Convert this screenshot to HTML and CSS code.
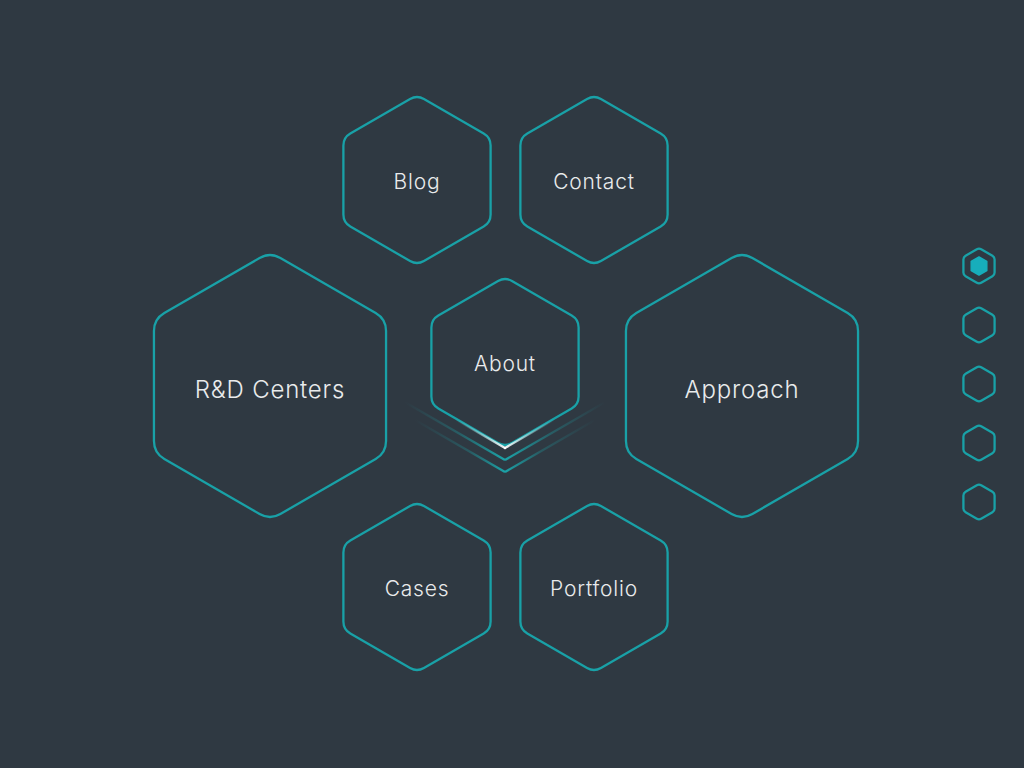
FILE: index.html
```html
<!DOCTYPE html>
<html lang="en">
<head>
<meta charset="utf-8">
<title>Honeycomb menu</title>
<link rel="stylesheet" href="styles.css">
</head>
<body>
<div class="page">
  <main class="stage">
    <a class="hex hex-sm blog" href="#">
      <svg class="hex-shape" viewBox="0 0 150 172"><path d="M81.93 5 L141.68 39.5 Q148.61 43.5 148.61 51.5 L148.61 120.5 Q148.61 128.5 141.68 132.5 L81.93 167 Q75 171 68.07 167 L8.32 132.5 Q1.39 128.5 1.39 120.5 L1.39 51.5 Q1.39 43.5 8.32 39.5 L68.07 5 Q75 1 81.93 5 Z"/></svg>
      <span class="label">Blog</span>
    </a>
    <a class="hex hex-sm contact" href="#">
      <svg class="hex-shape" viewBox="0 0 150 172"><path d="M81.93 5 L141.68 39.5 Q148.61 43.5 148.61 51.5 L148.61 120.5 Q148.61 128.5 141.68 132.5 L81.93 167 Q75 171 68.07 167 L8.32 132.5 Q1.39 128.5 1.39 120.5 L1.39 51.5 Q1.39 43.5 8.32 39.5 L68.07 5 Q75 1 81.93 5 Z"/></svg>
      <span class="label">Contact</span>
    </a>
    <a class="hex hex-lg rd" href="#">
      <svg class="hex-shape" viewBox="0 0 236 270"><path d="M128.39 7 L223.66 62 Q234.05 68 234.05 80 L234.05 190 Q234.05 202 223.66 208 L128.39 263 Q118 269 107.61 263 L12.34 208 Q1.95 202 1.95 190 L1.95 80 Q1.95 68 12.34 62 L107.61 7 Q118 1 128.39 7 Z"/></svg>
      <span class="label">R&amp;D Centers</span>
    </a>
    <a class="hex hex-sm about" href="#">
      <svg class="hex-shape" viewBox="0 0 150 172"><path d="M81.93 5 L141.68 39.5 Q148.61 43.5 148.61 51.5 L148.61 120.5 Q148.61 128.5 141.68 132.5 L81.93 167 Q75 171 68.07 167 L8.32 132.5 Q1.39 128.5 1.39 120.5 L1.39 51.5 Q1.39 43.5 8.32 39.5 L68.07 5 Q75 1 81.93 5 Z"/></svg>
      <span class="label">About</span>
    </a>
    <a class="hex hex-lg approach" href="#">
      <svg class="hex-shape" viewBox="0 0 236 270"><path d="M128.39 7 L223.66 62 Q234.05 68 234.05 80 L234.05 190 Q234.05 202 223.66 208 L128.39 263 Q118 269 107.61 263 L12.34 208 Q1.95 202 1.95 190 L1.95 80 Q1.95 68 12.34 62 L107.61 7 Q118 1 128.39 7 Z"/></svg>
      <span class="label">Approach</span>
    </a>
    <a class="hex hex-sm cases" href="#">
      <svg class="hex-shape" viewBox="0 0 150 172"><path d="M81.93 5 L141.68 39.5 Q148.61 43.5 148.61 51.5 L148.61 120.5 Q148.61 128.5 141.68 132.5 L81.93 167 Q75 171 68.07 167 L8.32 132.5 Q1.39 128.5 1.39 120.5 L1.39 51.5 Q1.39 43.5 8.32 39.5 L68.07 5 Q75 1 81.93 5 Z"/></svg>
      <span class="label">Cases</span>
    </a>
    <a class="hex hex-sm portfolio" href="#">
      <svg class="hex-shape" viewBox="0 0 150 172"><path d="M81.93 5 L141.68 39.5 Q148.61 43.5 148.61 51.5 L148.61 120.5 Q148.61 128.5 141.68 132.5 L81.93 167 Q75 171 68.07 167 L8.32 132.5 Q1.39 128.5 1.39 120.5 L1.39 51.5 Q1.39 43.5 8.32 39.5 L68.07 5 Q75 1 81.93 5 Z"/></svg>
      <span class="label">Portfolio</span>
    </a>

    <svg class="chevrons" viewBox="0 0 240 100" aria-hidden="true">
      <defs>
        <linearGradient id="hlL" gradientUnits="userSpaceOnUse" x1="120" y1="0" x2="70" y2="0">
          <stop offset="0" stop-color="#ffffff" stop-opacity="0.95"/>
          <stop offset="1" stop-color="#9fe3e6" stop-opacity="0"/>
        </linearGradient>
        <linearGradient id="hlR" gradientUnits="userSpaceOnUse" x1="120" y1="0" x2="170" y2="0">
          <stop offset="0" stop-color="#ffffff" stop-opacity="0.95"/>
          <stop offset="1" stop-color="#9fe3e6" stop-opacity="0"/>
        </linearGradient>
        <linearGradient id="c2L" gradientUnits="userSpaceOnUse" x1="120" y1="0" x2="20" y2="0">
          <stop offset="0" stop-color="#1ba3a8" stop-opacity="1"/>
          <stop offset="0.45" stop-color="#1ba3a8" stop-opacity="0.35"/>
          <stop offset="1" stop-color="#1ba3a8" stop-opacity="0"/>
        </linearGradient>
        <linearGradient id="c2R" gradientUnits="userSpaceOnUse" x1="120" y1="0" x2="220" y2="0">
          <stop offset="0" stop-color="#1ba3a8" stop-opacity="1"/>
          <stop offset="0.45" stop-color="#1ba3a8" stop-opacity="0.35"/>
          <stop offset="1" stop-color="#1ba3a8" stop-opacity="0"/>
        </linearGradient>
        <linearGradient id="c3L" gradientUnits="userSpaceOnUse" x1="120" y1="0" x2="30" y2="0">
          <stop offset="0" stop-color="#1ba3a8" stop-opacity="1"/>
          <stop offset="0.4" stop-color="#1ba3a8" stop-opacity="0.3"/>
          <stop offset="1" stop-color="#1ba3a8" stop-opacity="0"/>
        </linearGradient>
        <linearGradient id="c3R" gradientUnits="userSpaceOnUse" x1="120" y1="0" x2="210" y2="0">
          <stop offset="0" stop-color="#1ba3a8" stop-opacity="1"/>
          <stop offset="0.4" stop-color="#1ba3a8" stop-opacity="0.3"/>
          <stop offset="1" stop-color="#1ba3a8" stop-opacity="0"/>
        </linearGradient>
      </defs>
      <path d="M120 50 L72 22.3" stroke="url(#hlL)" stroke-width="2.2" fill="none" stroke-linecap="round"/>
      <path d="M120 50 L168 22.3" stroke="url(#hlR)" stroke-width="2.2" fill="none" stroke-linecap="round"/>
      <path d="M120 62 L20 4.3" stroke="url(#c2L)" stroke-width="2.2" fill="none"/>
      <path d="M120 62 L220 4.3" stroke="url(#c2R)" stroke-width="2.2" fill="none"/>
      <path d="M120 74 L30 22" stroke="url(#c3L)" stroke-width="2.2" fill="none"/>
      <path d="M120 74 L210 22" stroke="url(#c3R)" stroke-width="2.2" fill="none"/>
    </svg>
  </main>

  <nav class="dots">
    <a class="dot active" href="#"><svg viewBox="0 0 36 40"><path class="dot-outline" d="M20.17 3.25 L31.43 9.75 Q33.59 11 33.59 13.5 L33.59 26.5 Q33.59 29 31.43 30.25 L20.17 36.75 Q18 38 15.83 36.75 L4.58 30.25 Q2.41 29 2.41 26.5 L2.41 13.5 Q2.41 11 4.58 9.75 L15.83 3.25 Q18 2 20.17 3.25 Z"/><polygon class="dot-fill" points="18,11 25.8,15.5 25.8,24.5 18,29 10.2,24.5 10.2,15.5"/></svg></a>
    <a class="dot" href="#"><svg viewBox="0 0 36 40"><path class="dot-outline" d="M20.17 3.25 L31.43 9.75 Q33.59 11 33.59 13.5 L33.59 26.5 Q33.59 29 31.43 30.25 L20.17 36.75 Q18 38 15.83 36.75 L4.58 30.25 Q2.41 29 2.41 26.5 L2.41 13.5 Q2.41 11 4.58 9.75 L15.83 3.25 Q18 2 20.17 3.25 Z"/></svg></a>
    <a class="dot" href="#"><svg viewBox="0 0 36 40"><path class="dot-outline" d="M20.17 3.25 L31.43 9.75 Q33.59 11 33.59 13.5 L33.59 26.5 Q33.59 29 31.43 30.25 L20.17 36.75 Q18 38 15.83 36.75 L4.58 30.25 Q2.41 29 2.41 26.5 L2.41 13.5 Q2.41 11 4.58 9.75 L15.83 3.25 Q18 2 20.17 3.25 Z"/></svg></a>
    <a class="dot" href="#"><svg viewBox="0 0 36 40"><path class="dot-outline" d="M20.17 3.25 L31.43 9.75 Q33.59 11 33.59 13.5 L33.59 26.5 Q33.59 29 31.43 30.25 L20.17 36.75 Q18 38 15.83 36.75 L4.58 30.25 Q2.41 29 2.41 26.5 L2.41 13.5 Q2.41 11 4.58 9.75 L15.83 3.25 Q18 2 20.17 3.25 Z"/></svg></a>
    <a class="dot" href="#"><svg viewBox="0 0 36 40"><path class="dot-outline" d="M20.17 3.25 L31.43 9.75 Q33.59 11 33.59 13.5 L33.59 26.5 Q33.59 29 31.43 30.25 L20.17 36.75 Q18 38 15.83 36.75 L4.58 30.25 Q2.41 29 2.41 26.5 L2.41 13.5 Q2.41 11 4.58 9.75 L15.83 3.25 Q18 2 20.17 3.25 Z"/></svg></a>
  </nav>
</div>
</body>
</html>
```

FILE: styles.css
```css
html, body {
  margin: 0;
  padding: 0;
  background: #2f3942;
  overflow: hidden;
}

.page {
  display: flex;
  align-items: center;
  width: 1024px;
  height: 768px;
  font-family: Inter, "Liberation Sans", sans-serif;
}

.stage {
  position: relative;
  flex: 1;
  height: 768px;
}

.hex {
  position: absolute;
  display: flex;
  align-items: center;
  justify-content: center;
  color: #e9ebec;
  text-decoration: none;
}

.hex-sm {
  width: 150px;
  height: 172px;
}

.hex-lg {
  width: 236px;
  height: 270px;
}

.hex-shape {
  position: absolute;
  inset: 0;
  width: 100%;
  height: 100%;
  overflow: visible;
}

.hex-shape path {
  fill: none;
  stroke: #19a1a7;
  stroke-width: 2.3;
}

.label {
  position: relative;
  font-weight: 300;
  font-size: 21px;
  letter-spacing: 0.8px;
  line-height: 1;
  margin-top: 2px;
}

.hex-lg .label {
  font-size: 24px;
  letter-spacing: 0.8px;
  margin-top: 8px;
}

.blog { left: 342px; top: 94px; }
.contact { left: 519px; top: 94px; }
.about { left: 430px; top: 276px; }
.rd { left: 152px; top: 251px; }
.approach { left: 624px; top: 251px; }
.cases { left: 342px; top: 501px; }
.portfolio { left: 519px; top: 501px; }

.chevrons {
  position: absolute;
  left: 385px;
  top: 398px;
  width: 240px;
  height: 100px;
  pointer-events: none;
}

.dots {
  display: flex;
  flex-direction: column;
  gap: 19px;
  margin-right: 27px;
}

.dot {
  display: block;
  width: 36px;
  height: 40px;
}

.dot svg {
  display: block;
  width: 36px;
  height: 40px;
}

.dot-outline {
  fill: none;
  stroke: #19a1a7;
  stroke-width: 2.3;
}

.dot-fill {
  fill: #17aebb;
  stroke: #17aebb;
  stroke-width: 1.5;
  stroke-linejoin: round;
}
```
